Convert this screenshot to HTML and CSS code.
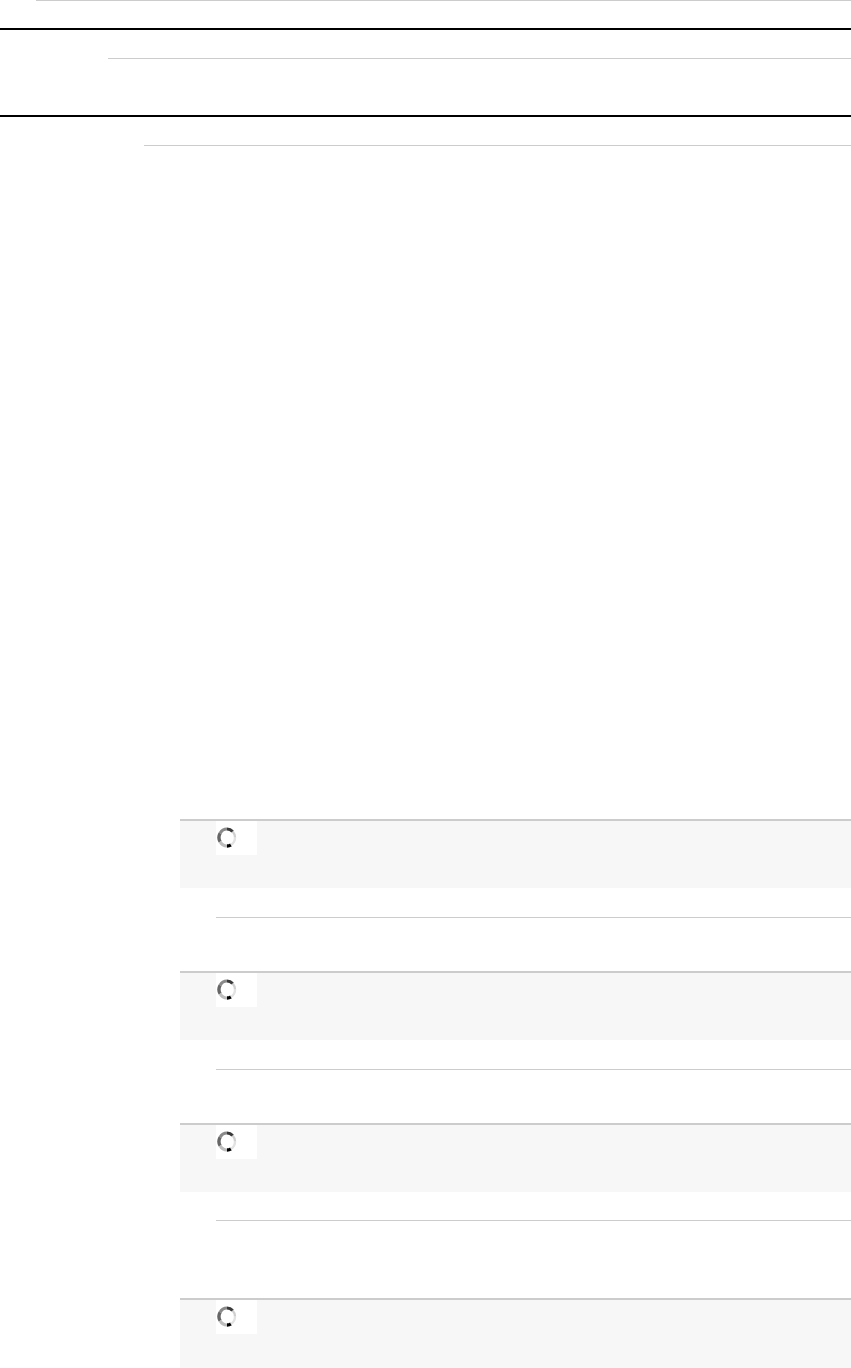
FILE: index.html
```html
<!DOCTYPE html>
<html>
<head>
<meta charset="utf-8">
<link rel="stylesheet" href="styles.css">
</head>
<body>
<div class="thread">
  <div class="rule rule-a"></div>
  <div class="bar bar-a"></div>
  <div class="rule rule-b"></div>
  <div class="bar bar-b"></div>
  <div class="rule rule-c"></div>

  <div class="panel panel-first">
    <div class="loader">
      <svg class="spin" width="22" height="23" viewBox="0 0 22 23">
        <path d="M11 3 A8 8.5 0 0 0 4.1 7.2" stroke="#8a8a8a" stroke-width="3.2" fill="none"/>
        <path d="M4.1 7.2 A8 8.5 0 0 0 4.1 15.8" stroke="#666" stroke-width="3.4" fill="none"/>
        <path d="M4.1 15.8 A8 8.5 0 0 0 11 20" stroke="#bdbdbd" stroke-width="3.2" fill="none"/>
        <path d="M11 20 A8 8.5 0 0 0 15 18.9" stroke="#000" stroke-width="3.4" fill="none"/>
        <path d="M15 18.9 A8 8.5 0 0 0 19 11.5" stroke="#e2e2e2" stroke-width="2.4" fill="none"/>
        <path d="M19 11.5 A8 8.5 0 0 0 16.6 5.5" stroke="#cfcfcf" stroke-width="2.4" fill="none"/>
        <path d="M16.6 5.5 A8 8.5 0 0 0 11 3" stroke="#3a3a3a" stroke-width="3.2" fill="none"/>
      </svg>
    </div>
  </div>
  <div class="rule rule-d"></div>

  <div class="panel panel-mid">
    <div class="loader">
      <svg class="spin" width="22" height="23" viewBox="0 0 22 23">
        <path d="M11 3 A8 8.5 0 0 0 4.1 7.2" stroke="#8a8a8a" stroke-width="3.2" fill="none"/>
        <path d="M4.1 7.2 A8 8.5 0 0 0 4.1 15.8" stroke="#666" stroke-width="3.4" fill="none"/>
        <path d="M4.1 15.8 A8 8.5 0 0 0 11 20" stroke="#bdbdbd" stroke-width="3.2" fill="none"/>
        <path d="M11 20 A8 8.5 0 0 0 15 18.9" stroke="#000" stroke-width="3.4" fill="none"/>
        <path d="M15 18.9 A8 8.5 0 0 0 19 11.5" stroke="#e2e2e2" stroke-width="2.4" fill="none"/>
        <path d="M19 11.5 A8 8.5 0 0 0 16.6 5.5" stroke="#cfcfcf" stroke-width="2.4" fill="none"/>
        <path d="M16.6 5.5 A8 8.5 0 0 0 11 3" stroke="#3a3a3a" stroke-width="3.2" fill="none"/>
      </svg>
    </div>
  </div>
  <div class="rule rule-d"></div>

  <div class="panel panel-mid">
    <div class="loader">
      <svg class="spin" width="22" height="23" viewBox="0 0 22 23">
        <path d="M11 3 A8 8.5 0 0 0 4.1 7.2" stroke="#8a8a8a" stroke-width="3.2" fill="none"/>
        <path d="M4.1 7.2 A8 8.5 0 0 0 4.1 15.8" stroke="#666" stroke-width="3.4" fill="none"/>
        <path d="M4.1 15.8 A8 8.5 0 0 0 11 20" stroke="#bdbdbd" stroke-width="3.2" fill="none"/>
        <path d="M11 20 A8 8.5 0 0 0 15 18.9" stroke="#000" stroke-width="3.4" fill="none"/>
        <path d="M15 18.9 A8 8.5 0 0 0 19 11.5" stroke="#e2e2e2" stroke-width="2.4" fill="none"/>
        <path d="M19 11.5 A8 8.5 0 0 0 16.6 5.5" stroke="#cfcfcf" stroke-width="2.4" fill="none"/>
        <path d="M16.6 5.5 A8 8.5 0 0 0 11 3" stroke="#3a3a3a" stroke-width="3.2" fill="none"/>
      </svg>
    </div>
  </div>
  <div class="rule rule-e"></div>

  <div class="panel panel-last">
    <div class="loader">
      <svg class="spin" width="22" height="23" viewBox="0 0 22 23">
        <path d="M11 3 A8 8.5 0 0 0 4.1 7.2" stroke="#8a8a8a" stroke-width="3.2" fill="none"/>
        <path d="M4.1 7.2 A8 8.5 0 0 0 4.1 15.8" stroke="#666" stroke-width="3.4" fill="none"/>
        <path d="M4.1 15.8 A8 8.5 0 0 0 11 20" stroke="#bdbdbd" stroke-width="3.2" fill="none"/>
        <path d="M11 20 A8 8.5 0 0 0 15 18.9" stroke="#000" stroke-width="3.4" fill="none"/>
        <path d="M15 18.9 A8 8.5 0 0 0 19 11.5" stroke="#e2e2e2" stroke-width="2.4" fill="none"/>
        <path d="M19 11.5 A8 8.5 0 0 0 16.6 5.5" stroke="#cfcfcf" stroke-width="2.4" fill="none"/>
        <path d="M16.6 5.5 A8 8.5 0 0 0 11 3" stroke="#3a3a3a" stroke-width="3.2" fill="none"/>
      </svg>
    </div>
  </div>
</div>
</body>
</html>
```

FILE: styles.css
```css
html, body {
  margin: 0;
  padding: 0;
  background: #ffffff;
  font-family: "Liberation Sans", Arial, sans-serif;
}

.thread {
  display: flex;
  flex-direction: column;
  width: 851px;
  height: 1368px;
  overflow: hidden;
}

.rule {
  border-top: 1px solid #cccccc;
  height: 0;
}

.bar {
  border-top: 2px solid #000000;
  height: 0;
}

.rule-a { margin-left: 36px; }
.bar-a { margin-top: 27px; }
.rule-b { margin-top: 28px; margin-left: 108px; }
.bar-b { margin-top: 56px; }
.rule-c { margin-top: 28px; margin-left: 144px; }

.panel {
  margin-left: 180px;
  border-top: 2px solid #cccccc;
  background: #f7f7f7;
  height: 67px;
  flex-shrink: 0;
  display: flex;
  padding-left: 36px;
}

.panel-first { margin-top: 673px; }
.panel-mid { margin-top: 53px; }
.panel-last { margin-top: 77px; height: 90px; }

.rule-d { margin-top: 29px; margin-left: 216px; }
.rule-e { margin-top: 28px; margin-left: 216px; }

.loader {
  width: 41px;
  height: 34px;
  background: #ffffff;
  display: flex;
  align-items: flex-start;
}

.spin {
  display: block;
  margin-top: 5px;
}
```
